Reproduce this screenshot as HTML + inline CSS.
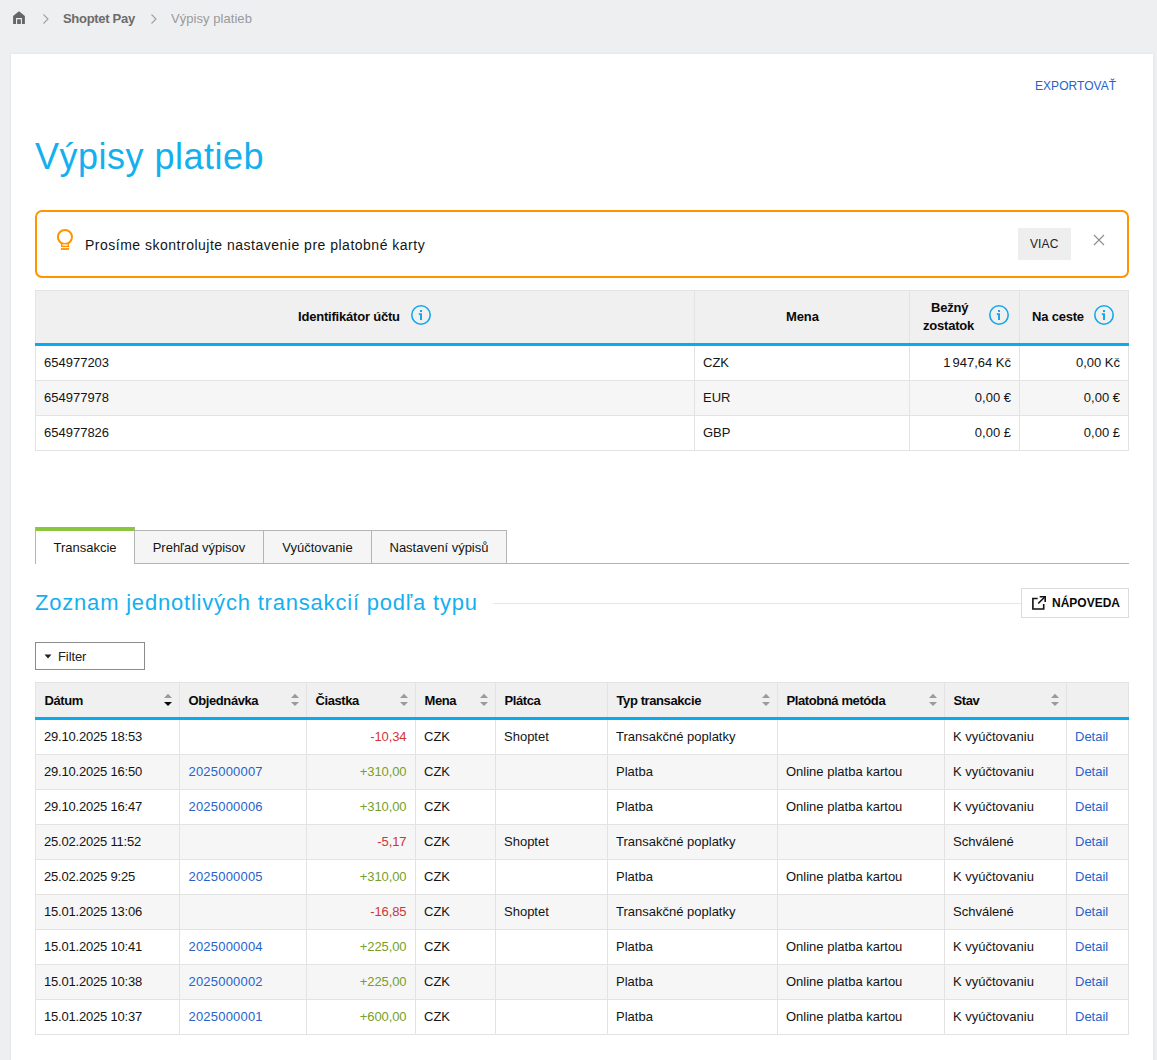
<!DOCTYPE html>
<html><head><meta charset="utf-8"><title>Výpisy platieb</title>
<style>
html,body{margin:0;padding:0;}html{overflow:hidden;height:1060px;}
body{width:1157px;height:1060px;overflow:hidden;background:#eeeff1;font-family:"Liberation Sans",sans-serif;font-size:13px;color:#1f1f1f;position:relative;}
.root{position:relative;width:1157px;height:1060px;overflow:hidden;}
.root>div{position:absolute;box-sizing:border-box;}
.t{white-space:nowrap;}
</style></head><body><div class="root">
<svg style="position:absolute;left:13px;top:11px;" width="12" height="13" viewBox="0 0 12 13"><path d="M6 0.2L11.9 4.9V13H0.1V4.9Z" fill="#666"/><path d="M3.6 13V7.6H8.4V13" fill="none" stroke="#eeeff1" stroke-width="1.1"/></svg>
<svg style="position:absolute;left:42px;top:13px;" width="8" height="12" viewBox="0 0 8 12"><path d="M1.5 1.5L6 6L1.5 10.5" fill="none" stroke="#a0a0a0" stroke-width="1.1"/></svg>
<div class="t" style="top:9px;font-size:13px;line-height:20px;color:#6b6b6b;font-weight:bold;letter-spacing:-0.3px;left:63px;">Shoptet Pay</div>
<svg style="position:absolute;left:150px;top:13px;" width="8" height="12" viewBox="0 0 8 12"><path d="M1.5 1.5L6 6L1.5 10.5" fill="none" stroke="#a0a0a0" stroke-width="1.1"/></svg>
<div class="t" style="top:9px;font-size:13px;line-height:20px;color:#9a9a9a;letter-spacing:0.05px;left:171px;">Výpisy platieb</div>
<div style="left:11px;top:54px;width:1142px;height:1016px;background:#fff;box-shadow:0 0 3px rgba(0,0,0,0.07);"></div>
<div class="t" style="top:76px;font-size:12px;line-height:20px;color:#2563cc;letter-spacing:0.05px;left:1035px;">EXPORTOVAŤ</div>
<div class="t" style="top:132px;font-size:36px;line-height:50px;color:#14b0ee;letter-spacing:0.5px;left:35px;">Výpisy platieb</div>
<div style="left:35px;top:210px;width:1094px;height:68px;border:2px solid #ff9300;border-radius:7px;"></div>
<svg style="position:absolute;left:52px;top:224px;" width="26" height="30" viewBox="0 0 26 30"><circle cx="12.95" cy="12.95" r="7.05" fill="none" stroke="#ff9300" stroke-width="2"/><rect x="9.65" y="19.7" width="6.7" height="2.7" fill="#fff" stroke="#ff9300" stroke-width="1.4"/><rect x="8.9" y="24.1" width="8.2" height="1.8" fill="#ff9300"/></svg>
<div class="t" style="top:235px;font-size:14px;line-height:20px;color:#141414;letter-spacing:0.5px;left:85px;">Prosíme skontrolujte nastavenie pre platobné karty</div>
<div style="left:1018px;top:228px;width:53px;height:32px;background:#eeeeee;"></div>
<div class="t" style="top:234px;font-size:12px;line-height:20px;color:#222;letter-spacing:0.1px;left:1030px;">VIAC</div>
<svg style="position:absolute;left:1093px;top:234px;" width="12" height="12" viewBox="0 0 12 12"><path d="M1 1L11 11M11 1L1 11" fill="none" stroke="#8b9096" stroke-width="1.15"/></svg>
<div style="left:35px;top:290px;width:1094px;height:53px;background:#f0f0f0;"></div>
<div style="left:35px;top:290px;width:1094px;height:1px;background:#e3e3e3;"></div>
<div style="left:35px;top:343px;width:1094px;height:3px;background:#08abeb;"></div>
<div style="left:35px;top:346px;width:1094px;height:34px;background:#fff;"></div>
<div style="left:35px;top:380px;width:1094px;height:1px;background:#e3e3e3;"></div>
<div style="left:35px;top:381px;width:1094px;height:34px;background:#f6f6f6;"></div>
<div style="left:35px;top:415px;width:1094px;height:1px;background:#e3e3e3;"></div>
<div style="left:35px;top:416px;width:1094px;height:34px;background:#fff;"></div>
<div style="left:35px;top:450px;width:1094px;height:1px;background:#e3e3e3;"></div>
<div style="left:35px;top:290px;width:1px;height:53px;background:#e3e3e3;"></div>
<div style="left:35px;top:346px;width:1px;height:104px;background:#e3e3e3;"></div>
<div style="left:694px;top:290px;width:1px;height:53px;background:#e3e3e3;"></div>
<div style="left:694px;top:346px;width:1px;height:104px;background:#e3e3e3;"></div>
<div style="left:909px;top:290px;width:1px;height:53px;background:#e3e3e3;"></div>
<div style="left:909px;top:346px;width:1px;height:104px;background:#e3e3e3;"></div>
<div style="left:1019px;top:290px;width:1px;height:53px;background:#e3e3e3;"></div>
<div style="left:1019px;top:346px;width:1px;height:104px;background:#e3e3e3;"></div>
<div style="left:1128px;top:290px;width:1px;height:53px;background:#e3e3e3;"></div>
<div style="left:1128px;top:346px;width:1px;height:104px;background:#e3e3e3;"></div>
<div class="t" style="top:307px;font-size:13px;line-height:20px;color:#0a0a0a;font-weight:bold;letter-spacing:-0.2px;left:298px;">Identifikátor účtu</div>
<svg style="position:absolute;left:410px;top:304px;" width="22" height="22" viewBox="0 0 22 22"><circle cx="11" cy="11" r="9.2" fill="none" stroke="#14a8ea" stroke-width="1.6"/><rect x="10" y="6" width="2" height="2" fill="#14a8ea"/><path d="M8.8 9.2H12V16H10V11H8.8Z" fill="#14a8ea"/></svg>
<div class="t" style="top:307px;font-size:13px;line-height:20px;color:#0a0a0a;font-weight:bold;letter-spacing:-0.1px;left:786px;">Mena</div>
<div class="t" style="top:298px;font-size:13px;line-height:20px;color:#0a0a0a;font-weight:bold;letter-spacing:-0.2px;left:931px;">Bežný</div>
<div class="t" style="top:316px;font-size:13px;line-height:20px;color:#0a0a0a;font-weight:bold;letter-spacing:-0.2px;left:923px;">zostatok</div>
<svg style="position:absolute;left:988px;top:304px;" width="22" height="22" viewBox="0 0 22 22"><circle cx="11" cy="11" r="9.2" fill="none" stroke="#14a8ea" stroke-width="1.6"/><rect x="10" y="6" width="2" height="2" fill="#14a8ea"/><path d="M8.8 9.2H12V16H10V11H8.8Z" fill="#14a8ea"/></svg>
<div class="t" style="top:307px;font-size:13px;line-height:20px;color:#0a0a0a;font-weight:bold;letter-spacing:-0.2px;left:1032px;">Na ceste</div>
<svg style="position:absolute;left:1093px;top:304px;" width="22" height="22" viewBox="0 0 22 22"><circle cx="11" cy="11" r="9.2" fill="none" stroke="#14a8ea" stroke-width="1.6"/><rect x="10" y="6" width="2" height="2" fill="#14a8ea"/><path d="M8.8 9.2H12V16H10V11H8.8Z" fill="#14a8ea"/></svg>
<div class="t" style="top:353px;font-size:13px;line-height:20px;color:#141414;left:44px;">654977203</div>
<div class="t" style="top:353px;font-size:13px;line-height:20px;color:#141414;left:703px;">CZK</div>
<div class="t" style="top:353px;font-size:13px;line-height:20px;color:#141414;right:146px;">1<span style="letter-spacing:-1.6px"> </span>947,64 Kč</div>
<div class="t" style="top:353px;font-size:13px;line-height:20px;color:#141414;right:37px;">0,00 Kč</div>
<div class="t" style="top:388px;font-size:13px;line-height:20px;color:#141414;left:44px;">654977978</div>
<div class="t" style="top:388px;font-size:13px;line-height:20px;color:#141414;left:703px;">EUR</div>
<div class="t" style="top:388px;font-size:13px;line-height:20px;color:#141414;right:146px;">0,00 €</div>
<div class="t" style="top:388px;font-size:13px;line-height:20px;color:#141414;right:37px;">0,00 €</div>
<div class="t" style="top:423px;font-size:13px;line-height:20px;color:#141414;left:44px;">654977826</div>
<div class="t" style="top:423px;font-size:13px;line-height:20px;color:#141414;left:703px;">GBP</div>
<div class="t" style="top:423px;font-size:13px;line-height:20px;color:#141414;right:146px;">0,00 £</div>
<div class="t" style="top:423px;font-size:13px;line-height:20px;color:#141414;right:37px;">0,00 £</div>
<div style="left:134px;top:563px;width:995px;height:1px;background:#b4b4b4;"></div>
<div style="left:134px;top:530px;width:130px;height:34px;background:#f5f5f5;border:1px solid #b4b4b4;"></div>
<div class="t" style="left:134px;width:130px;top:538px;font-size:13px;line-height:20px;text-align:center;color:#141414;">Prehľad výpisov</div>
<div style="left:263px;top:530px;width:109px;height:34px;background:#f5f5f5;border:1px solid #b4b4b4;"></div>
<div class="t" style="left:263px;width:109px;top:538px;font-size:13px;line-height:20px;text-align:center;color:#141414;">Vyúčtovanie</div>
<div style="left:371px;top:530px;width:136px;height:34px;background:#f5f5f5;border:1px solid #b4b4b4;"></div>
<div class="t" style="left:371px;width:136px;top:538px;font-size:13px;line-height:20px;text-align:center;color:#141414;">Nastavení výpisů</div>
<div style="left:35px;top:527px;width:100px;height:37px;background:#fff;border-left:1px solid #b4b4b4;border-right:1px solid #b4b4b4;border-top:4px solid #8cc63f;"></div>
<div class="t" style="left:35px;width:100px;top:538px;font-size:13px;line-height:20px;text-align:center;color:#141414;">Transakcie</div>
<div class="t" style="top:588px;font-size:22px;line-height:30px;color:#14b0ee;letter-spacing:0.8px;left:35px;">Zoznam jednotlivých transakcií podľa typu</div>
<div style="left:493px;top:603px;width:528px;height:1px;background:#e6e6e6;"></div>
<div style="left:1021px;top:588px;width:108px;height:30px;border:1px solid #dcdcdc;"></div>
<svg style="position:absolute;left:1026px;top:590px;" width="30" height="26" viewBox="0 0 30 26"><path d="M11.7 8.5H6.9V19H17.7V14" fill="none" stroke="#111" stroke-width="1.6"/><path d="M13.7 6.8H19.2V11.9" fill="none" stroke="#111" stroke-width="1.6"/><path d="M12.2 13.5L19 6.8" fill="none" stroke="#111" stroke-width="1.6"/></svg>
<div class="t" style="top:593px;font-size:12px;line-height:20px;color:#0a0a0a;font-weight:bold;left:1052px;">NÁPOVEDA</div>
<div style="left:35px;top:642px;width:110px;height:28px;border:1px solid #8c8c8c;"></div>
<svg style="position:absolute;left:44px;top:654px;" width="8" height="5" viewBox="0 0 8 5"><path d="M0.5 0.5H7.5L4 4.5Z" fill="#222"/></svg>
<div class="t" style="top:647px;font-size:13px;line-height:20px;color:#222;letter-spacing:-0.1px;left:58px;">Filter</div>
<div style="left:35px;top:682px;width:1094px;height:35px;background:#f0f0f0;"></div>
<div style="left:35px;top:682px;width:1094px;height:1px;background:#e3e3e3;"></div>
<div style="left:35px;top:717px;width:1094px;height:3px;background:#08abeb;"></div>
<div style="left:35px;top:720px;width:1094px;height:34px;background:#fff;"></div>
<div style="left:35px;top:754px;width:1094px;height:1px;background:#e3e3e3;"></div>
<div style="left:35px;top:755px;width:1094px;height:34px;background:#f6f6f6;"></div>
<div style="left:35px;top:789px;width:1094px;height:1px;background:#e3e3e3;"></div>
<div style="left:35px;top:790px;width:1094px;height:34px;background:#fff;"></div>
<div style="left:35px;top:824px;width:1094px;height:1px;background:#e3e3e3;"></div>
<div style="left:35px;top:825px;width:1094px;height:34px;background:#f6f6f6;"></div>
<div style="left:35px;top:859px;width:1094px;height:1px;background:#e3e3e3;"></div>
<div style="left:35px;top:860px;width:1094px;height:34px;background:#fff;"></div>
<div style="left:35px;top:894px;width:1094px;height:1px;background:#e3e3e3;"></div>
<div style="left:35px;top:895px;width:1094px;height:34px;background:#f6f6f6;"></div>
<div style="left:35px;top:929px;width:1094px;height:1px;background:#e3e3e3;"></div>
<div style="left:35px;top:930px;width:1094px;height:34px;background:#fff;"></div>
<div style="left:35px;top:964px;width:1094px;height:1px;background:#e3e3e3;"></div>
<div style="left:35px;top:965px;width:1094px;height:34px;background:#f6f6f6;"></div>
<div style="left:35px;top:999px;width:1094px;height:1px;background:#e3e3e3;"></div>
<div style="left:35px;top:1000px;width:1094px;height:34px;background:#fff;"></div>
<div style="left:35px;top:1034px;width:1094px;height:1px;background:#e3e3e3;"></div>
<div style="left:35px;top:682px;width:1px;height:35px;background:#e3e3e3;"></div>
<div style="left:35px;top:720px;width:1px;height:315px;background:#e3e3e3;"></div>
<div style="left:179px;top:682px;width:1px;height:35px;background:#e3e3e3;"></div>
<div style="left:179px;top:720px;width:1px;height:315px;background:#e3e3e3;"></div>
<div style="left:306px;top:682px;width:1px;height:35px;background:#e3e3e3;"></div>
<div style="left:306px;top:720px;width:1px;height:315px;background:#e3e3e3;"></div>
<div style="left:415px;top:682px;width:1px;height:35px;background:#e3e3e3;"></div>
<div style="left:415px;top:720px;width:1px;height:315px;background:#e3e3e3;"></div>
<div style="left:495px;top:682px;width:1px;height:35px;background:#e3e3e3;"></div>
<div style="left:495px;top:720px;width:1px;height:315px;background:#e3e3e3;"></div>
<div style="left:607px;top:682px;width:1px;height:35px;background:#e3e3e3;"></div>
<div style="left:607px;top:720px;width:1px;height:315px;background:#e3e3e3;"></div>
<div style="left:777px;top:682px;width:1px;height:35px;background:#e3e3e3;"></div>
<div style="left:777px;top:720px;width:1px;height:315px;background:#e3e3e3;"></div>
<div style="left:944px;top:682px;width:1px;height:35px;background:#e3e3e3;"></div>
<div style="left:944px;top:720px;width:1px;height:315px;background:#e3e3e3;"></div>
<div style="left:1066px;top:682px;width:1px;height:35px;background:#e3e3e3;"></div>
<div style="left:1066px;top:720px;width:1px;height:315px;background:#e3e3e3;"></div>
<div style="left:1128px;top:682px;width:1px;height:35px;background:#e3e3e3;"></div>
<div style="left:1128px;top:720px;width:1px;height:315px;background:#e3e3e3;"></div>
<div class="t" style="top:691px;font-size:13px;line-height:20px;color:#0a0a0a;font-weight:bold;letter-spacing:-0.4px;left:44.5px;">Dátum</div>
<svg style="position:absolute;left:164px;top:693px;" width="8" height="14" viewBox="0 0 8 14"><path d="M0 4.9L4 0.7L8 4.9Z" fill="#9a9a9a"/><path d="M0 8.9L4 13.1L8 8.9Z" fill="#0a0a0a"/></svg>
<div class="t" style="top:691px;font-size:13px;line-height:20px;color:#0a0a0a;font-weight:bold;letter-spacing:-0.4px;left:188.5px;">Objednávka</div>
<svg style="position:absolute;left:291px;top:693px;" width="8" height="14" viewBox="0 0 8 14"><path d="M0 4.9L4 0.7L8 4.9Z" fill="#9a9a9a"/><path d="M0 8.9L4 13.1L8 8.9Z" fill="#9a9a9a"/></svg>
<div class="t" style="top:691px;font-size:13px;line-height:20px;color:#0a0a0a;font-weight:bold;letter-spacing:-0.4px;left:315.5px;">Čiastka</div>
<svg style="position:absolute;left:400px;top:693px;" width="8" height="14" viewBox="0 0 8 14"><path d="M0 4.9L4 0.7L8 4.9Z" fill="#9a9a9a"/><path d="M0 8.9L4 13.1L8 8.9Z" fill="#9a9a9a"/></svg>
<div class="t" style="top:691px;font-size:13px;line-height:20px;color:#0a0a0a;font-weight:bold;letter-spacing:-0.4px;left:424.5px;">Mena</div>
<svg style="position:absolute;left:480px;top:693px;" width="8" height="14" viewBox="0 0 8 14"><path d="M0 4.9L4 0.7L8 4.9Z" fill="#9a9a9a"/><path d="M0 8.9L4 13.1L8 8.9Z" fill="#9a9a9a"/></svg>
<div class="t" style="top:691px;font-size:13px;line-height:20px;color:#0a0a0a;font-weight:bold;letter-spacing:-0.4px;left:504.5px;">Plátca</div>
<div class="t" style="top:691px;font-size:13px;line-height:20px;color:#0a0a0a;font-weight:bold;letter-spacing:-0.4px;left:616.5px;">Typ transakcie</div>
<svg style="position:absolute;left:762px;top:693px;" width="8" height="14" viewBox="0 0 8 14"><path d="M0 4.9L4 0.7L8 4.9Z" fill="#9a9a9a"/><path d="M0 8.9L4 13.1L8 8.9Z" fill="#9a9a9a"/></svg>
<div class="t" style="top:691px;font-size:13px;line-height:20px;color:#0a0a0a;font-weight:bold;letter-spacing:-0.4px;left:786.5px;">Platobná metóda</div>
<svg style="position:absolute;left:929px;top:693px;" width="8" height="14" viewBox="0 0 8 14"><path d="M0 4.9L4 0.7L8 4.9Z" fill="#9a9a9a"/><path d="M0 8.9L4 13.1L8 8.9Z" fill="#9a9a9a"/></svg>
<div class="t" style="top:691px;font-size:13px;line-height:20px;color:#0a0a0a;font-weight:bold;letter-spacing:-0.4px;left:953.5px;">Stav</div>
<svg style="position:absolute;left:1051px;top:693px;" width="8" height="14" viewBox="0 0 8 14"><path d="M0 4.9L4 0.7L8 4.9Z" fill="#9a9a9a"/><path d="M0 8.9L4 13.1L8 8.9Z" fill="#9a9a9a"/></svg>
<div class="t" style="top:727px;font-size:13px;line-height:20px;color:#141414;letter-spacing:-0.2px;left:44px;">29.10.2025 18:53</div>
<div class="t" style="top:727px;font-size:13px;line-height:20px;color:#cf3535;letter-spacing:-0.1px;right:750.5px;">-10,34</div>
<div class="t" style="top:727px;font-size:13px;line-height:20px;color:#141414;left:424px;">CZK</div>
<div class="t" style="top:727px;font-size:13px;line-height:20px;color:#141414;left:504px;">Shoptet</div>
<div class="t" style="top:727px;font-size:13px;line-height:20px;color:#141414;left:616px;">Transakčné poplatky</div>
<div class="t" style="top:727px;font-size:13px;line-height:20px;color:#141414;left:953px;">K vyúčtovaniu</div>
<div class="t" style="top:727px;font-size:13px;line-height:20px;color:#2563cc;left:1075px;">Detail</div>
<div class="t" style="top:762px;font-size:13px;line-height:20px;color:#141414;letter-spacing:-0.2px;left:44px;">29.10.2025 16:50</div>
<div class="t" style="top:762px;font-size:13px;line-height:20px;color:#2563cc;letter-spacing:0.2px;left:188.5px;">2025000007</div>
<div class="t" style="top:762px;font-size:13px;line-height:20px;color:#78a02a;letter-spacing:-0.1px;right:750.5px;">+310,00</div>
<div class="t" style="top:762px;font-size:13px;line-height:20px;color:#141414;left:424px;">CZK</div>
<div class="t" style="top:762px;font-size:13px;line-height:20px;color:#141414;left:616px;">Platba</div>
<div class="t" style="top:762px;font-size:13px;line-height:20px;color:#141414;left:786px;">Online platba kartou</div>
<div class="t" style="top:762px;font-size:13px;line-height:20px;color:#141414;left:953px;">K vyúčtovaniu</div>
<div class="t" style="top:762px;font-size:13px;line-height:20px;color:#2563cc;left:1075px;">Detail</div>
<div class="t" style="top:797px;font-size:13px;line-height:20px;color:#141414;letter-spacing:-0.2px;left:44px;">29.10.2025 16:47</div>
<div class="t" style="top:797px;font-size:13px;line-height:20px;color:#2563cc;letter-spacing:0.2px;left:188.5px;">2025000006</div>
<div class="t" style="top:797px;font-size:13px;line-height:20px;color:#78a02a;letter-spacing:-0.1px;right:750.5px;">+310,00</div>
<div class="t" style="top:797px;font-size:13px;line-height:20px;color:#141414;left:424px;">CZK</div>
<div class="t" style="top:797px;font-size:13px;line-height:20px;color:#141414;left:616px;">Platba</div>
<div class="t" style="top:797px;font-size:13px;line-height:20px;color:#141414;left:786px;">Online platba kartou</div>
<div class="t" style="top:797px;font-size:13px;line-height:20px;color:#141414;left:953px;">K vyúčtovaniu</div>
<div class="t" style="top:797px;font-size:13px;line-height:20px;color:#2563cc;left:1075px;">Detail</div>
<div class="t" style="top:832px;font-size:13px;line-height:20px;color:#141414;letter-spacing:-0.2px;left:44px;">25.02.2025 11:52</div>
<div class="t" style="top:832px;font-size:13px;line-height:20px;color:#cf3535;letter-spacing:-0.1px;right:750.5px;">-5,17</div>
<div class="t" style="top:832px;font-size:13px;line-height:20px;color:#141414;left:424px;">CZK</div>
<div class="t" style="top:832px;font-size:13px;line-height:20px;color:#141414;left:504px;">Shoptet</div>
<div class="t" style="top:832px;font-size:13px;line-height:20px;color:#141414;left:616px;">Transakčné poplatky</div>
<div class="t" style="top:832px;font-size:13px;line-height:20px;color:#141414;left:953px;">Schválené</div>
<div class="t" style="top:832px;font-size:13px;line-height:20px;color:#2563cc;left:1075px;">Detail</div>
<div class="t" style="top:867px;font-size:13px;line-height:20px;color:#141414;letter-spacing:-0.2px;left:44px;">25.02.2025 9:25</div>
<div class="t" style="top:867px;font-size:13px;line-height:20px;color:#2563cc;letter-spacing:0.2px;left:188.5px;">2025000005</div>
<div class="t" style="top:867px;font-size:13px;line-height:20px;color:#78a02a;letter-spacing:-0.1px;right:750.5px;">+310,00</div>
<div class="t" style="top:867px;font-size:13px;line-height:20px;color:#141414;left:424px;">CZK</div>
<div class="t" style="top:867px;font-size:13px;line-height:20px;color:#141414;left:616px;">Platba</div>
<div class="t" style="top:867px;font-size:13px;line-height:20px;color:#141414;left:786px;">Online platba kartou</div>
<div class="t" style="top:867px;font-size:13px;line-height:20px;color:#141414;left:953px;">K vyúčtovaniu</div>
<div class="t" style="top:867px;font-size:13px;line-height:20px;color:#2563cc;left:1075px;">Detail</div>
<div class="t" style="top:902px;font-size:13px;line-height:20px;color:#141414;letter-spacing:-0.2px;left:44px;">15.01.2025 13:06</div>
<div class="t" style="top:902px;font-size:13px;line-height:20px;color:#cf3535;letter-spacing:-0.1px;right:750.5px;">-16,85</div>
<div class="t" style="top:902px;font-size:13px;line-height:20px;color:#141414;left:424px;">CZK</div>
<div class="t" style="top:902px;font-size:13px;line-height:20px;color:#141414;left:504px;">Shoptet</div>
<div class="t" style="top:902px;font-size:13px;line-height:20px;color:#141414;left:616px;">Transakčné poplatky</div>
<div class="t" style="top:902px;font-size:13px;line-height:20px;color:#141414;left:953px;">Schválené</div>
<div class="t" style="top:902px;font-size:13px;line-height:20px;color:#2563cc;left:1075px;">Detail</div>
<div class="t" style="top:937px;font-size:13px;line-height:20px;color:#141414;letter-spacing:-0.2px;left:44px;">15.01.2025 10:41</div>
<div class="t" style="top:937px;font-size:13px;line-height:20px;color:#2563cc;letter-spacing:0.2px;left:188.5px;">2025000004</div>
<div class="t" style="top:937px;font-size:13px;line-height:20px;color:#78a02a;letter-spacing:-0.1px;right:750.5px;">+225,00</div>
<div class="t" style="top:937px;font-size:13px;line-height:20px;color:#141414;left:424px;">CZK</div>
<div class="t" style="top:937px;font-size:13px;line-height:20px;color:#141414;left:616px;">Platba</div>
<div class="t" style="top:937px;font-size:13px;line-height:20px;color:#141414;left:786px;">Online platba kartou</div>
<div class="t" style="top:937px;font-size:13px;line-height:20px;color:#141414;left:953px;">K vyúčtovaniu</div>
<div class="t" style="top:937px;font-size:13px;line-height:20px;color:#2563cc;left:1075px;">Detail</div>
<div class="t" style="top:972px;font-size:13px;line-height:20px;color:#141414;letter-spacing:-0.2px;left:44px;">15.01.2025 10:38</div>
<div class="t" style="top:972px;font-size:13px;line-height:20px;color:#2563cc;letter-spacing:0.2px;left:188.5px;">2025000002</div>
<div class="t" style="top:972px;font-size:13px;line-height:20px;color:#78a02a;letter-spacing:-0.1px;right:750.5px;">+225,00</div>
<div class="t" style="top:972px;font-size:13px;line-height:20px;color:#141414;left:424px;">CZK</div>
<div class="t" style="top:972px;font-size:13px;line-height:20px;color:#141414;left:616px;">Platba</div>
<div class="t" style="top:972px;font-size:13px;line-height:20px;color:#141414;left:786px;">Online platba kartou</div>
<div class="t" style="top:972px;font-size:13px;line-height:20px;color:#141414;left:953px;">K vyúčtovaniu</div>
<div class="t" style="top:972px;font-size:13px;line-height:20px;color:#2563cc;left:1075px;">Detail</div>
<div class="t" style="top:1007px;font-size:13px;line-height:20px;color:#141414;letter-spacing:-0.2px;left:44px;">15.01.2025 10:37</div>
<div class="t" style="top:1007px;font-size:13px;line-height:20px;color:#2563cc;letter-spacing:0.2px;left:188.5px;">2025000001</div>
<div class="t" style="top:1007px;font-size:13px;line-height:20px;color:#78a02a;letter-spacing:-0.1px;right:750.5px;">+600,00</div>
<div class="t" style="top:1007px;font-size:13px;line-height:20px;color:#141414;left:424px;">CZK</div>
<div class="t" style="top:1007px;font-size:13px;line-height:20px;color:#141414;left:616px;">Platba</div>
<div class="t" style="top:1007px;font-size:13px;line-height:20px;color:#141414;left:786px;">Online platba kartou</div>
<div class="t" style="top:1007px;font-size:13px;line-height:20px;color:#141414;left:953px;">K vyúčtovaniu</div>
<div class="t" style="top:1007px;font-size:13px;line-height:20px;color:#2563cc;left:1075px;">Detail</div>
</div></body></html>
